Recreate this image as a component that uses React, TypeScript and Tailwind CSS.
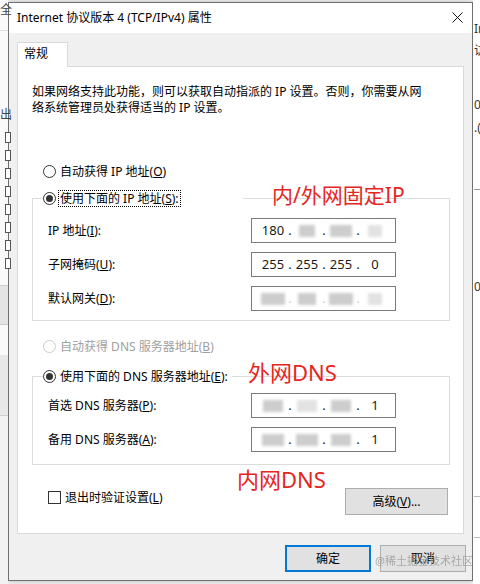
import type { ReactNode } from 'react';

const FONT = "font-['Noto_Sans','Noto_Sans_CJK_SC',sans-serif]";

function Radio({ checked, disabled }: { checked?: boolean; disabled?: boolean }) {
  return (
    <span
      className={`flex h-[13px] w-[13px] shrink-0 items-center justify-center rounded-full border bg-white ${
        disabled ? 'border-[#cccccc]' : 'border-[#333333]'
      }`}
    >
      {checked && <span className="h-[7px] w-[7px] rounded-full bg-[#333333]" />}
    </span>
  );
}

// blurred-out digits in the address boxes
function Smudge({ w = 20, tone = 'mid' }: { w?: number; tone?: 'mid' | 'light' }) {
  return (
    <span
      className={`inline-block h-[12px] blur-[1.5px] ${tone === 'mid' ? 'bg-[#cdcdcd]' : 'bg-[#e2e2e2]'}`}
      style={{ width: w }}
    />
  );
}

function IpBox({ parts, dots = true }: { parts: ReactNode[]; dots?: boolean }) {
  return (
    <div className="flex h-[25px] w-[145px] items-center border border-[#7a7a7a] bg-white pl-[6px] text-[13px] text-[#1a1a1a]">
      {parts.map((p, i) => (
        <div key={i} className="flex items-center">
          {i > 0 && <span className={`w-[4px] text-center ${dots ? '' : 'text-[#d0d0d0]'}`}>.</span>}
          <span className="flex w-[30px] justify-center">{p}</span>
        </div>
      ))}
    </div>
  );
}

function Field({ label, children }: { label: ReactNode; children: ReactNode }) {
  return (
    <div className="flex h-[25px] items-center">
      <span className="w-[203px]">{label}</span>
      {children}
    </div>
  );
}

function Btn({ children, primary, className = '' }: { children: ReactNode; primary?: boolean; className?: string }) {
  return (
    <button
      className={`flex h-[27px] items-center justify-center bg-[#e1e1e1] text-[12px] text-black ${
        primary ? 'border-2 border-[#0078d7]' : 'border border-[#adadad]'
      } ${className}`}
    >
      {children}
    </button>
  );
}

function LeftStrip() {
  return (
    <div className="relative flex w-[8px] shrink-0 flex-col bg-[#fafafa]">
      <div className="h-[30px] text-[12px] leading-[20px] text-[#444444]">全</div>
      <div className="h-[70px] border-t border-[#dddddd]" />
      <div className="mt-[6px] text-[12px] text-[#444444]">出</div>
      <div className="mt-[8px] flex flex-col gap-[7px] pl-[5px]">
        {[0, 1, 2, 3, 4, 5, 6, 7].map((i) => (
          <span key={i} className="h-[11px] w-[6px] border border-[#555555] bg-white" />
        ))}
      </div>
      <div className="mt-[16px] h-[40px] border-y border-[#cccccc] bg-[#e4e4e4]" />
      <div className="mt-[30px] h-[60px] bg-[#e8e8e8]" />
      <div className="flex-1 border-t border-[#d0d0d0] bg-[#f2f2f2]" />
    </div>
  );
}

function RightStrip() {
  return (
    <div className="flex flex-1 flex-col overflow-hidden whitespace-nowrap bg-white pl-[1px] text-[12px] text-[#333333]">
      <div className="mt-[20px]">In</div>
      <div className="mt-[4px]">访</div>
      <div className="mt-[36px]">0(</div>
      <div className="mt-[5px]">.(</div>
      <div className="mt-[52px] border-t border-[#9a9a9a]" />
      <div className="mt-[88px]">0</div>
      <div className="mt-[200px] border-t border-[#bbbbbb]" />
      <div className="mt-[40px] border-t border-[#bbbbbb]" />
    </div>
  );
}

export default function App() {
  return (
    <div className={`relative flex h-[584px] w-[480px] overflow-hidden bg-[#f3f3f3] text-[12px] text-black ${FONT}`}>
      <LeftStrip />

      <div className="mt-[2px] flex h-[579px] w-[465px] shrink-0 flex-col border border-[#6f6f6f] bg-[#f0f0f0] shadow-[0_0_6px_rgba(0,0,0,0.25)]">
        {/* title bar */}
        <div className="flex h-[30px] items-center justify-between bg-white pl-[8px] pr-[9px]">
          <span className="text-[12px]">Internet 协议版本 4 (TCP/IPv4) 属性</span>
          <svg width="11" height="11" viewBox="0 0 11 11" className="mt-[-2px]">
            <path d="M0.5 0.5 L10.5 10.5 M10.5 0.5 L0.5 10.5" stroke="#111111" strokeWidth="1" />
          </svg>
        </div>

        {/* tab */}
        <div className="relative z-10 ml-[8px] mt-[9px] -mb-px flex h-[25px] w-[51px] items-start border border-b-0 border-[#d9d9d9] bg-white pl-[6px] pt-[2px]">
          常规
        </div>

        {/* tab page */}
        <div className="ml-[8px] flex h-[468px] w-[447px] flex-col border border-[#d9d9d9] bg-white pl-[14px] pr-[15px]">
          <p className="mt-[17px] leading-[16px]">
            如果网络支持此功能，则可以获取自动指派的 IP 设置。否则，你需要从网
            <br />
            络系统管理员处获得适当的 IP 设置。
          </p>

          <label className="ml-[11px] mt-[47px] flex h-[17px] items-center gap-[4px]">
            <Radio />
            <span>
              自动获得 IP 地址(<u>O</u>)
            </span>
          </label>

          <fieldset className="mt-[10px] w-[418px] border border-[#dcdcdc]">
            <legend className="ml-[10px] flex h-[17px] w-[200px] items-center gap-[2px] bg-white">
              <Radio checked />
              <span className="border border-dotted border-black px-[1px] leading-[15px]">
                使用下面的 IP 地址(<u>S</u>):
              </span>
            </legend>
            <div className="flex flex-col gap-[9px] pb-[9px] pl-[15px] pt-[11px]">
              <Field
                label={
                  <>
                    IP 地址(<u>I</u>):
                  </>
                }
              >
                <IpBox parts={['180', <Smudge key="a" w={16} />, <Smudge key="b" w={22} />, <Smudge key="c" w={14} tone="light" />]} />
              </Field>
              <Field
                label={
                  <>
                    子网掩码(<u>U</u>):
                  </>
                }
              >
                <IpBox parts={['255', '255', '255', '0']} />
              </Field>
              <Field
                label={
                  <>
                    默认网关(<u>D</u>):
                  </>
                }
              >
                <IpBox dots={false} parts={[<Smudge key="a" w={24} />, <Smudge key="b" w={18} />, <Smudge key="c" w={24} />, <Smudge key="d" w={14} tone="light" />]} />
              </Field>
            </div>
          </fieldset>

          <label className="ml-[11px] mt-[17px] flex h-[17px] items-center gap-[4px] text-[#a0a0a0]">
            <Radio disabled />
            <span>
              自动获得 DNS 服务器地址(<u>B</u>)
            </span>
          </label>

          <fieldset className="mt-[13px] w-[418px] border border-[#dcdcdc]">
            <legend className="ml-[10px] flex h-[17px] items-center gap-[4px] bg-white pr-[4px]">
              <Radio checked />
              <span>
                使用下面的 DNS 服务器地址(<u>E</u>):
              </span>
            </legend>
            <div className="flex flex-col gap-[9px] pb-[12px] pl-[15px] pt-[8px]">
              <Field
                label={
                  <>
                    首选 DNS 服务器(<u>P</u>):
                  </>
                }
              >
                <IpBox parts={[<Smudge key="a" w={20} />, <Smudge key="b" w={20} tone="light" />, <Smudge key="c" w={20} />, '1']} />
              </Field>
              <Field
                label={
                  <>
                    备用 DNS 服务器(<u>A</u>):
                  </>
                }
              >
                <IpBox parts={[<Smudge key="a" w={22} />, <Smudge key="b" w={22} />, <Smudge key="c" w={20} />, '1']} />
              </Field>
            </div>
          </fieldset>

          <div className="mt-[23px] flex items-start justify-between">
            <label className="ml-[16px] mt-[1px] flex h-[17px] items-center gap-[4px]">
              <span className="h-[13px] w-[13px] border border-[#333333] bg-white" />
              <span>
                退出时验证设置(<u>L</u>)
              </span>
            </label>
            <Btn className="w-[103px]">
              高级(<u>V</u>)...
            </Btn>
          </div>
        </div>

        {/* dialog buttons */}
        <div className="mt-[11px] flex justify-end gap-[9px] pr-[6px]">
          <Btn primary className="w-[86px]">
            确定
          </Btn>
          <Btn className="w-[86px]">取消</Btn>
        </div>
      </div>

      <RightStrip />

      {/* red annotations drawn over the screenshot */}
      <span className="absolute left-[272px] top-[182px] text-[21px] leading-[26px] text-[#e4261f]">内/外网固定IP</span>
      <span className="absolute left-[248px] top-[359px] text-[22px] leading-[26px] text-[#e4261f]">外网DNS</span>
      <span className="absolute left-[237px] top-[466px] text-[22px] leading-[26px] text-[#e4261f]">内网DNS</span>

      {/* site watermark */}
      <span className="absolute left-[375px] top-[553px] text-[11px] leading-[16px] text-[#9a9a9a] opacity-80">@稀土掘金技术社区</span>
    </div>
  );
}
